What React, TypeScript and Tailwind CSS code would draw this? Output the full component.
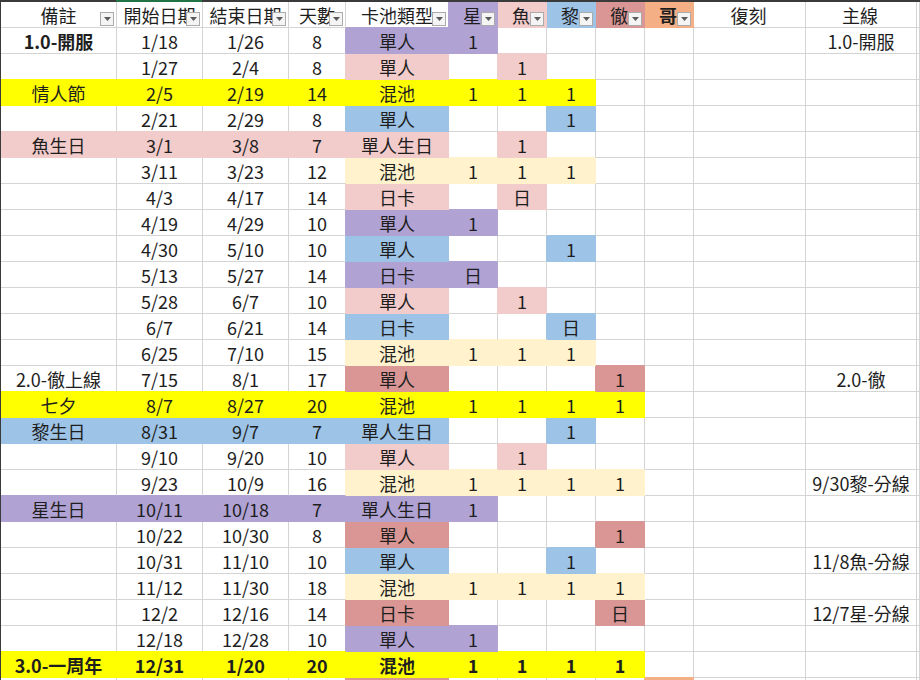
import React from "react";

type Fill = "P" | "K" | "B" | "R" | "L" | "Y" | "O";

const FILLS: Record<Fill, { bg: string; br: string; bb: string }> = {
  P: { bg: "bg-[#b1a2d4]", br: "border-r-[#b1a2d4]", bb: "border-b-[#b1a2d4]" },
  K: { bg: "bg-[#f2cbcb]", br: "border-r-[#f2cbcb]", bb: "border-b-[#f2cbcb]" },
  B: { bg: "bg-[#9dc3e6]", br: "border-r-[#9dc3e6]", bb: "border-b-[#9dc3e6]" },
  R: { bg: "bg-[#d99694]", br: "border-r-[#d99694]", bb: "border-b-[#d99694]" },
  L: { bg: "bg-[#fff2cc]", br: "border-r-[#fff2cc]", bb: "border-b-[#fff2cc]" },
  Y: { bg: "bg-[#ffff00]", br: "border-r-[#ffff00]", bb: "border-b-[#ffff00]" },
  O: { bg: "bg-[#f4b084]", br: "border-r-[#f4b084]", bb: "border-b-[#f4b084]" },
};

const GRID =
  "grid grid-cols-[116px_86px_86px_57px_103px_49px_49px_49px_49px_49px_112px_111px_1fr]";

const HEADERS = ["備註", "開始日期", "結束日期", "天數", "卡池類型", "星", "魚", "黎", "徹", "哥", "復刻", "主線", ""];
const HEADER_FILL = ".....PKBRO...";
// columns that get a filter button
const FILTERS = [0, 1, 2, 3, 4, 5, 6, 7, 8, 9];

// [texts, fills, bold] bold: 0 none, 1 first cell, 2 whole row
const ROWS: [string[], string, number][] = [
  [["1.0-開服", "1/18", "1/26", "8", "單人", "1", "", "", "", "", "", "1.0-開服"], "....PP.......", 1],
  [["", "1/27", "2/4", "8", "單人", "", "1"], "....K.K......", 0],
  [["情人節", "2/5", "2/19", "14", "混池", "1", "1", "1"], "YYYYYYYY.....", 0],
  [["", "2/21", "2/29", "8", "單人", "", "", "1"], "....B..B.....", 0],
  [["魚生日", "3/1", "3/8", "7", "單人生日", "", "1"], "KKKKK.K......", 0],
  [["", "3/11", "3/23", "12", "混池", "1", "1", "1"], "....LLLL.....", 0],
  [["", "4/3", "4/17", "14", "日卡", "", "日"], "....K.K......", 0],
  [["", "4/19", "4/29", "10", "單人", "1"], "....PP.......", 0],
  [["", "4/30", "5/10", "10", "單人", "", "", "1"], "....B..B.....", 0],
  [["", "5/13", "5/27", "14", "日卡", "日"], "....PP.......", 0],
  [["", "5/28", "6/7", "10", "單人", "", "1"], "....K.K......", 0],
  [["", "6/7", "6/21", "14", "日卡", "", "", "日"], "....B..B.....", 0],
  [["", "6/25", "7/10", "15", "混池", "1", "1", "1"], "....LLLL.....", 0],
  [["2.0-徹上線", "7/15", "8/1", "17", "單人", "", "", "", "1", "", "", "2.0-徹"], "....R...R....", 0],
  [["七夕", "8/7", "8/27", "20", "混池", "1", "1", "1", "1"], "YYYYYYYYY....", 0],
  [["黎生日", "8/31", "9/7", "7", "單人生日", "", "", "1"], "BBBBB..B.....", 0],
  [["", "9/10", "9/20", "10", "單人", "", "1"], "....K.K......", 0],
  [["", "9/23", "10/9", "16", "混池", "1", "1", "1", "1", "", "", "9/30黎-分線"], "....LLLLL....", 0],
  [["星生日", "10/11", "10/18", "7", "單人生日", "1"], "PPPPPP.......", 0],
  [["", "10/22", "10/30", "8", "單人", "", "", "", "1"], "....R...R....", 0],
  [["", "10/31", "11/10", "10", "單人", "", "", "1", "", "", "", "11/8魚-分線"], "....B..B.....", 0],
  [["", "11/12", "11/30", "18", "混池", "1", "1", "1", "1"], "....LLLLL....", 0],
  [["", "12/2", "12/16", "14", "日卡", "", "", "", "日", "", "", "12/7星-分線"], "....R...R....", 0],
  [["", "12/18", "12/28", "10", "單人", "1"], "....PP.......", 0],
  [["3.0-一周年", "12/31", "1/20", "20", "混池", "1", "1", "1", "1"], "YYYYYYYYY....", 2],
  [[], "....R....O...", 0],
];

const fillAt = (s: string | undefined, i: number): Fill | undefined => {
  const c = s?.[i];
  return c && c !== "." ? (c as Fill) : undefined;
};

const FilterButton: React.FC = () => (
  <span className="absolute right-[2px] bottom-[1px] flex h-[14px] w-[14px] items-center justify-center border border-[#ababab] bg-[#f4f4f4]">
    <svg width="7" height="4" viewBox="0 0 7 4">
      <path d="M0 0h7L3.5 4z" fill="#5a5a5a" />
    </svg>
  </span>
);

const App: React.FC = () => {
  const allFills = [HEADER_FILL, ...ROWS.map((r) => r[1])];

  const cellClass = (row: number, col: number) => {
    const f = fillAt(allFills[row], col);
    const right = f ?? fillAt(allFills[row], col + 1);
    const below = f ?? fillAt(allFills[row + 1], col);
    return [
      "relative flex items-center justify-center overflow-hidden whitespace-nowrap border-r border-b",
      f ? FILLS[f].bg : "bg-white",
      right ? FILLS[right].br : "border-r-[#d4d4d4]",
      below ? FILLS[below].bb : "border-b-[#d4d4d4]",
    ].join(" ");
  };

  return (
    <div
      className="h-[680px] w-[920px] overflow-hidden border-l border-l-[#3a3a3a] bg-white text-[18px] leading-[26px] text-[#1e1e1e]"
      style={{ fontFamily: '"Noto Sans CJK TC", "Noto Sans", sans-serif' }}
    >
      <div className="flex h-[2px]">
        <div className="w-[115px] bg-[#3a3a3a]" />
        <div className="w-[86px] bg-[#217346]" />
        <div className="flex-1 bg-[#3a3a3a]" />
      </div>
      <div className={`${GRID} h-[26px]`}>
        {HEADERS.map((h, c) => (
          <div key={c} className={`${cellClass(0, c)} ${c === 9 ? "font-bold" : ""}`}>
            <span className={c < 5 ? "" : "pr-[2px]"}>{h}</span>
            {FILTERS.includes(c) && <FilterButton />}
          </div>
        ))}
      </div>
      {ROWS.map(([texts, , bold], r) => (
        <div key={r} className={`${GRID} h-[26px]`}>
          {Array.from({ length: 13 }).map((_, c) => (
            <div
              key={c}
              className={`${cellClass(r + 1, c)} ${bold === 2 || (bold === 1 && c === 0) ? "font-bold" : ""}`}
            >
              {texts[c] ?? ""}
            </div>
          ))}
        </div>
      ))}
    </div>
  );
};

export default App;
